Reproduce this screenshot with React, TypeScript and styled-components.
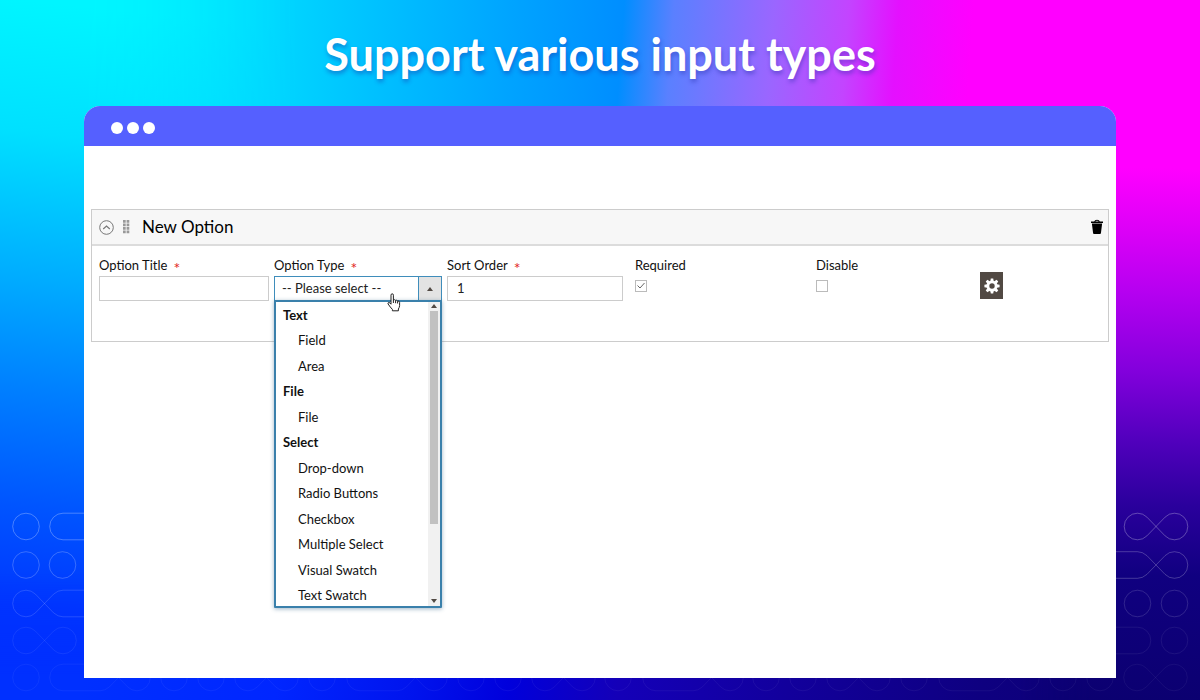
import React from "react";
import styled, { createGlobalStyle } from "styled-components";

const GlobalStyle = createGlobalStyle`
  * { box-sizing: border-box; }
  body { margin: 0; }
  body, input, select, button { font-family: Lato, "Liberation Sans", sans-serif; }
`;

const Page = styled.div`
  position: relative;
  isolation: isolate;
  display: flex;
  flex-direction: column;
  min-height: 100vh;
  padding: 0 7% 22px;
  overflow: hidden;
  background: linear-gradient(94deg, #00f6ff 4%, #00d2ff 24%, #00a4ff 41%, #008eff 50%, #5a80ff 54%, #9a66ff 62%, #c344ff 68%, #e410ff 72%, #ff00ff 78%);
`;

const Glow = styled.div<{ $side: "left" | "right" | "bottom" }>`
  position: absolute;
  z-index: -1;
  inset: ${(p) => (p.$side === "left" ? "0 75% 0 0" : p.$side === "right" ? "0 0 0 85%" : "82% 0 0 0")};
  background: ${(p) =>
    p.$side === "left"
      ? "linear-gradient(186deg, #00f5ff 4%, #00e0ff 22%, #00acff 42%, #0080ff 57%, #0055ff 73%, #0036ff 87%, #002cff 98%)"
      : p.$side === "right"
        ? "linear-gradient(181deg, #ff00ff 24%, #e000f8 32%, #b400f0 42%, #8200dc 53%, #5000bc 63%, #2a009c 72%, #100080 82%, #0b0070 100%)"
        : "linear-gradient(98deg, #0030ff 8%, #0026ff 24%, #0014ee 35%, #0000dc 43%, #1400b8 52%, #12009c 66%, #0e0080 82%, #0b0070 100%)"};
  mask-image: ${(p) =>
    p.$side === "left"
      ? "linear-gradient(90deg, #000 28%, transparent)"
      : p.$side === "right"
        ? "linear-gradient(270deg, #000 60%, transparent)"
        : "linear-gradient(0deg, #000 20%, transparent)"};
`;

const Pattern = styled.svg`
  position: absolute;
  z-index: -1;
  left: 0;
  bottom: 0;
  width: 100%;
  height: 200px;
  fill: none;
  stroke: #fff;
`;

const Title = styled.h1`
  margin: 0;
  height: 106px;
  line-height: 108px;
  text-align: center;
  color: #fff;
  font-size: 45px;
  font-weight: 700;
  text-shadow: 1px 3px 4px rgba(30, 40, 160, 0.4);
`;

const Window = styled.main`
  flex: 1;
  display: flex;
  flex-direction: column;
  min-height: 572px;
  background: #fff;
  border-radius: 16px 16px 0 0;
`;

const TitleBar = styled.div`
  display: flex;
  align-items: center;
  gap: 4px;
  height: 40px;
  padding: 4px 27px 0;
  background: #5560ff;
  border-radius: 16px 16px 0 0;
`;

const Dot = styled.span`
  width: 12px;
  height: 12px;
  border-radius: 50%;
  background: #fff;
`;

const Panel = styled.section`
  margin: 63px 7px 0;
  border: 1px solid #ccc;
`;

const PanelHeader = styled.header`
  display: flex;
  align-items: center;
  height: 36px;
  padding: 0 4px 0 7px;
  background: #f7f7f7;
  border-bottom: 2px solid #dcdcdc;
`;

const IconButton = styled.button`
  display: flex;
  padding: 0;
  border: 0;
  background: none;
`;

const Grip = styled.svg`
  margin: 0 12px 0 8px;
  fill: #999;
`;

const PanelTitle = styled.h2`
  flex: 1;
  margin: 0;
  font-size: 17px;
  font-weight: 400;
  line-height: 20px;
  color: #000;
`;

const Fields = styled.div`
  display: grid;
  grid-template-columns: 170fr 168fr 176fr 176fr 164fr 124fr;
  column-gap: 5px;
  height: 95px;
  padding: 12px 6px 0 7px;
`;

const Field = styled.div<{ $inset?: boolean }>`
  position: relative;
  min-width: 0;
  padding-left: ${(p) => (p.$inset ? "7px" : "0")};
`;

const Label = styled.label`
  display: flex;
  align-items: flex-start;
  gap: 6px;
  height: 18px;
  line-height: 15px;
  font-size: 13px;
  color: #111;
`;

const Star = styled.span`
  font-size: 16px;
  line-height: 20px;
  color: #e22626;
`;

const TextInput = styled.input`
  display: block;
  width: 100%;
  height: 25px;
  padding: 0 9px 2px;
  border: 1px solid #ccc;
  background: #fff;
  font-size: 13px;
  color: #222;
`;

const SelectWrap = styled.div`
  position: relative;
`;

const Select = styled.select`
  display: block;
  appearance: none;
  width: 100%;
  height: 25px;
  padding: 0 30px 2px 7px;
  border: 1px solid #3f8dbb;
  border-radius: 0;
  background: #fff;
  font-size: 13px;
  color: #222;
`;

const SelectArrow = styled.span`
  position: absolute;
  top: 1px;
  right: 1px;
  display: flex;
  align-items: center;
  justify-content: center;
  width: 23px;
  height: 23px;
  border-left: 1px solid #3f8dbb;
  background: #e3e3e3;
  pointer-events: none;
`;

const Menu = styled.div`
  position: absolute;
  z-index: 2;
  top: 24px;
  left: 0;
  right: 0;
  display: flex;
  height: 308px;
  overflow: hidden;
  border: 2px solid #3a80ab;
  border-radius: 1px;
  background: #fff;
  box-shadow: 0 1px 4px rgba(40, 90, 130, 0.45);
`;

const Options = styled.ul`
  flex: 1;
  display: grid;
  grid-auto-rows: 1fr;
  height: 306px;
  margin: 0;
  padding: 0;
  list-style: none;
`;

const Option = styled.li<{ $group?: boolean }>`
  display: flex;
  align-items: center;
  padding-left: ${(p) => (p.$group ? "7px" : "22px")};
  font-size: 13px;
  font-weight: ${(p) => (p.$group ? 700 : 400)};
  color: #111;
`;

const ScrollTrack = styled.div`
  display: flex;
  flex-direction: column;
  align-items: center;
  justify-content: space-between;
  width: 12px;
  padding: 2px 0 3px;
  background: #f1f1f1;
`;

const ScrollThumb = styled.div`
  width: 8px;
  height: 213px;
  margin: 3px 0 auto;
  background: #c1c1c1;
`;

const Pointer = styled.svg`
  position: absolute;
  z-index: 3;
  top: 17px;
  left: 113px;
`;

const CheckBox = styled.input`
  appearance: none;
  display: block;
  width: 12px;
  height: 12px;
  margin: 4px 0 0;
  border: 1px solid #bbb;
  background: #fff;
`;

const Tick = styled.svg`
  position: absolute;
  top: 22px;
  left: 7px;
  pointer-events: none;
`;

const SettingsButton = styled.button`
  display: flex;
  align-items: center;
  justify-content: center;
  width: 23px;
  height: 27px;
  margin: 14px 0 0 2px;
  padding: 0;
  border: 0;
  background: #514943;
`;

const R = 13.3;
const D = 9.4;
const circle = (x: number, y: number) => `M${x - R} ${y}a${R} ${R} 0 1 0 ${2 * R} 0a${R} ${R} 0 1 0 ${-2 * R} 0`;
const infinity = (a: number, y: number, b = a + 37) =>
  `M${a + D} ${y - D}L${b - D} ${y + D}A${R} ${R} 0 1 0 ${b - D} ${y - D}L${a + D} ${y + D}A${R} ${R} 0 1 1 ${a + D} ${y - D}`;
const openRight = (x: number, y: number, end: number) => `M${end} ${y - R}H${x}A${R} ${R} 0 0 0 ${x} ${y + R}H${end}`;
const crossEnd = (x: number, y: number, start: number) =>
  `M${start} ${y - R}H${x}Q${x + 5} ${y - R} ${x + D} ${y - D}L${x + 37 - D} ${y + D}A${R} ${R} 0 1 0 ${x + 37 - D} ${y - D}L${x + D} ${y + D}Q${x + 5} ${y + R} ${x} ${y + R}H${start}`;
const crossStart = (x: number, y: number, end: number) =>
  `M${end} ${y - R}H${x + 37}Q${x + 32} ${y - R} ${x + 37 - D} ${y - D}L${x + D} ${y + D}A${R} ${R} 0 1 1 ${x + D} ${y - D}L${x + 37 - D} ${y + D}Q${x + 32} ${y + R} ${x + 37} ${y + R}H${end}`;

const bottomY = 177.5;
const bottomRow = [
  circle(26, bottomY),
  ...[63, 360, 656, 952].map((x) => openRight(x, bottomY, x + 37) + crossEnd(x + 37, bottomY, x + 37)),
  ...[174, 211, 322, 471, 508, 618, 766, 803, 914, 1063, 1100].map((x) => circle(x, bottomY)),
  ...[248, 545, 840, 1137].map((x) => infinity(x, bottomY)),
].join("");

const patternRows = [
  { opacity: 0.28, d: circle(26, 26.5) + openRight(63, 26.5, 100) + infinity(1137.5, 26.5) },
  { opacity: 0.22, d: circle(26, 65) + circle(62.5, 65) + crossEnd(1137.5, 65, 1100) },
  { opacity: 0.14, d: crossStart(26, 103.5, 100) + circle(1137.5, 103.5) + circle(1174.5, 103.5) },
  { opacity: 0.07, d: infinity(26, 140.5) + `M1100 ${140.5 - R}H1137.5a${R} ${R} 0 0 1 0 ${2 * R}H1100` + circle(1174.5, 140.5) },
  { opacity: 0.05, d: bottomRow },
];

const options: { text: string; group?: boolean }[] = [
  { text: "Text", group: true },
  { text: "Field" },
  { text: "Area" },
  { text: "File", group: true },
  { text: "File" },
  { text: "Select", group: true },
  { text: "Drop-down" },
  { text: "Radio Buttons" },
  { text: "Checkbox" },
  { text: "Multiple Select" },
  { text: "Visual Swatch" },
  { text: "Text Swatch" },
];

const Triangle = ({ down = false }: { down?: boolean }) => (
  <svg width="6" height="4" viewBox="0 0 6 4" aria-hidden="true">
    <path d={down ? "M0 0H6L3 4Z" : "M0 4H6L3 0Z"} fill="#514943" />
  </svg>
);

export default function App() {
  return (
    <Page>
      <GlobalStyle />
      <Glow $side="left" />
      <Glow $side="bottom" />
      <Glow $side="right" />
      <Pattern viewBox="0 0 1200 200" preserveAspectRatio="xMidYMax slice" aria-hidden="true">
        {patternRows.map((row) => (
          <path key={row.opacity} d={row.d} opacity={row.opacity} />
        ))}
      </Pattern>
      <Title>Support various input types</Title>
      <Window>
        <TitleBar>
          <Dot />
          <Dot />
          <Dot />
        </TitleBar>
        <Panel>
          <PanelHeader>
            <IconButton type="button" aria-label="Collapse">
              <svg width="15" height="15" viewBox="0 0 15 15" fill="none" stroke="#777">
                <circle cx="7.5" cy="7.5" r="6.8" />
                <path d="M4.2 9L7.5 6L10.8 9" strokeWidth="1.2" />
              </svg>
            </IconButton>
            <Grip width="8" height="14" viewBox="0 0 8 14" aria-hidden="true">
              {[0, 1, 2, 3].map((row) => (
                <path key={row} d={`M1 ${row * 3.5}h2.7v2.7h-2.7zM4.6 ${row * 3.5}h2.7v2.7h-2.7z`} />
              ))}
            </Grip>
            <PanelTitle>New Option</PanelTitle>
            <IconButton type="button" aria-label="Delete">
              <svg width="14" height="16" viewBox="0 0 14 16">
                <path d="M1 2.6H4.2Q4.6 .8 7 .8T9.8 2.6H13V4H1ZM5.3 2.6H8.7Q8.3 1.8 7 1.8T5.3 2.6Z" fillRule="evenodd" />
                <path d="M1.9 4.4H12.1L10.9 14.2Q10.8 15 10 15H4Q3.2 15 3.1 14.2Z" />
              </svg>
            </IconButton>
          </PanelHeader>
          <Fields>
            <Field>
              <Label htmlFor="title">
                Option Title<Star>*</Star>
              </Label>
              <TextInput id="title" type="text" />
            </Field>
            <Field>
              <Label htmlFor="type">
                Option Type<Star>*</Star>
              </Label>
              <SelectWrap>
                <Select id="type" defaultValue="">
                  <option value="">-- Please select --</option>
                </Select>
                <SelectArrow>
                  <Triangle />
                </SelectArrow>
                <Menu>
                  <Options role="listbox" aria-label="Option Type">
                    {options.map((o, i) => (
                      <Option key={i} $group={o.group} role={o.group ? "presentation" : "option"}>
                        {o.text}
                      </Option>
                    ))}
                  </Options>
                  <ScrollTrack>
                    <Triangle />
                    <ScrollThumb />
                    <Triangle down />
                  </ScrollTrack>
                </Menu>
                <Pointer width="14" height="19" viewBox="0 0 14 19" aria-hidden="true">
                  <path
                    d="M4 11.2V2.2Q4 .8 5.2 .8T6.4 2.2V7Q7.6 6.2 8.6 7.4Q9.8 6.8 10.6 8Q12.4 7.6 12.6 9.4V12.6Q12.4 14.6 11.4 16V17.8H5.4V16.4Q3.4 14.4 1 10.9Q.7 9.6 1.8 9.5T4 11.2M6.4 7V10M8.6 7.6V10.2M10.6 8.2V10.5"
                    fill="#fff"
                    stroke="#222"
                    strokeLinejoin="round"
                  />
                </Pointer>
              </SelectWrap>
            </Field>
            <Field>
              <Label htmlFor="sort">
                Sort Order<Star>*</Star>
              </Label>
              <TextInput id="sort" type="text" defaultValue="1" />
            </Field>
            <Field $inset>
              <Label htmlFor="required">Required</Label>
              <CheckBox id="required" type="checkbox" defaultChecked />
              <Tick width="12" height="12" viewBox="0 0 12 12" aria-hidden="true">
                <path d="M2.5 5.5L5 8L9.5 3" fill="none" stroke="#666" />
              </Tick>
            </Field>
            <Field $inset>
              <Label htmlFor="disable">Disable</Label>
              <CheckBox id="disable" type="checkbox" />
            </Field>
            <Field>
              <SettingsButton type="button" aria-label="Settings">
                <svg width="16" height="16" viewBox="-8 -8 16 16" fill="#fff">
                  {[0, 45, 90, 135, 180, 225, 270, 315].map((a) => (
                    <path key={a} d="M-1.7 -4.6L-1.2 -7.6H1.2L1.7 -4.6Z" transform={`rotate(${a})`} />
                  ))}
                  <circle r="4.1" fill="none" stroke="#fff" strokeWidth="2.8" />
                </svg>
              </SettingsButton>
            </Field>
          </Fields>
        </Panel>
      </Window>
    </Page>
  );
}
